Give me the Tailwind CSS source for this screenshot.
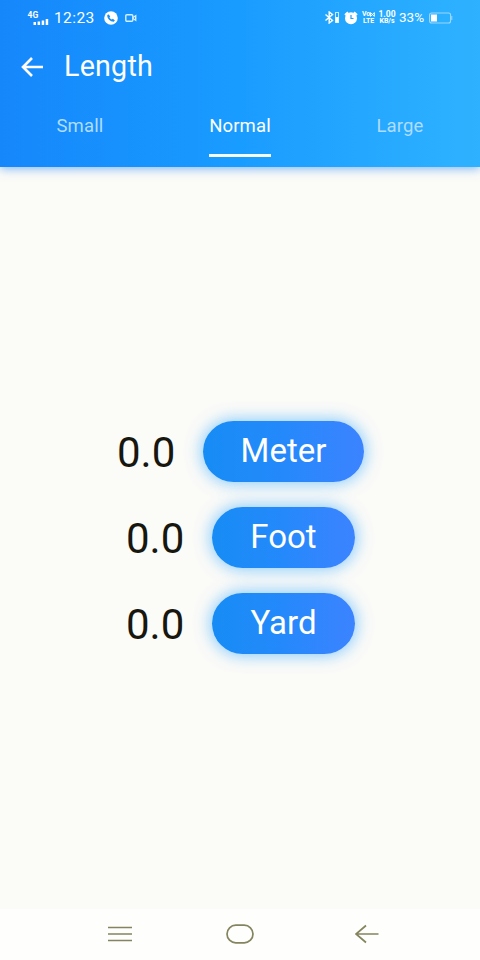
<!DOCTYPE html>
<html lang="en"><head><meta charset="utf-8"><title>Length</title>
<script src="https://cdn.jsdelivr.net/npm/@tailwindcss/browser@4"></script></head>
<body class="w-[480px] h-[960px] overflow-hidden flex flex-col bg-[#fbfbf8] font-[Roboto,sans-serif]">
<header class="h-[167px] shrink-0 flex flex-col text-white bg-linear-to-r from-[#1687fb] via-[#199cff] to-[#2eb2ff] shadow-[0_2px_9px_#4d9df5b0]">
  <div class="h-[35px] flex items-center pl-[27px] pr-[27px]">
    <svg class="w-[23px] h-[16px]" viewBox="0 0 23 16" fill="#fff"><text x="0.500" y="8" font-size="8.5" font-weight="700" font-family="Roboto">4G</text><path d="M6.500 12h2.500v3H6.500zM10.600 11.500h2.500v3.500h-2.500zM14.700 10.500h2.500v4.500h-2.500zM18.700 9h2.500v6h-2.500z"/></svg>
    <span class="ml-[4px] text-[15.5px] leading-[18px] tracking-[.4px] w-[42px] whitespace-nowrap">12:23</span>
    <svg class="ml-[8px] w-[14px] h-[14px]" viewBox="0 0 14 14"><circle cx="7" cy="7" r="6.800" fill="#fff"/><path d="M4.300 3.200 3.200 4.300c0 3.500 3 6.500 6.500 6.500l1.200-1.300-2-1.700-1.200.8c-1-.5-1.700-1.200-2.200-2.200l.7-1.200z" fill="#198ff4"/></svg>
    <svg class="ml-[7px] w-[12px] h-[8px]" viewBox="0 0 12 8" fill="none" stroke="#d4efff" stroke-width="1.400"><rect x=".8" y=".8" width="7" height="6.400" rx="1"/><path d="m8 3.500 2.700-1.800v4.600L8 4.500"/></svg>
    <div class="ml-auto flex items-center">
      <svg class="w-[16px] h-[13px]" viewBox="0 0 16 13" fill="none" stroke="#fff" stroke-width="1.400"><path d="m1.500 3.500 7 6L5.200 12V1l3.300 2.500-7 6"/><rect x="11.500" y="1.500" width="3" height="10" stroke="#c9e9ff" stroke-width="1"/><path d="M13 6v5.500" stroke-width="3"/></svg>
      <svg class="ml-[4px] w-[14px] h-[14px]" viewBox="0 0 14 14"><circle cx="7" cy="7.300" r="6" fill="#fff"/><path d="M1 4 4 1.300M13 4l-3-2.700" stroke="#fff" stroke-width="2"/><path d="M7 4v3.500h2.500" fill="none" stroke="#249ff8" stroke-width="1.200"/></svg>
      <span class="ml-[4px] w-[13px] text-[7px] leading-[6.5px] font-bold text-center whitespace-nowrap tracking-[-.1px]"><span class="flex h-[6.5px] items-center justify-center">Vo<svg class="w-[5px] h-[5px]" viewBox="0 0 5 5" fill="none" stroke="#fff"><path d="M.5 4.500v-4l4 4v-4z"/></svg></span>LTE</span>
      <span class="ml-[3px] w-[18px] text-[7px] leading-[6.5px] font-bold text-center whitespace-nowrap"><span class="text-[8.5px]">1.00</span><br>KB/s</span>
      <span class="ml-[3px] w-[26px] text-[13.5px] whitespace-nowrap">33%</span>
      <svg class="ml-[4px] w-[24px] h-[12px]" viewBox="0 0 24 12"><rect x=".6" y="1" width="21" height="10" rx="2" fill="none" stroke="#9bd8ff" stroke-width="1.100"/><path d="M2 2.500h6v7H2z" fill="#fff"/><path d="M22.800 4v4" stroke="#9bd8ff"/></svg>
    </div>
  </div>
  <div class="h-[64px] flex items-center pl-[21px]">
    <svg class="w-[22px] h-[20px]" viewBox="0 0 22 20" fill="none" stroke="#fff" stroke-width="2.600"><path d="M11 1 2 10l9 9M2 10h20"/></svg>
    <h1 class="ml-[21px] -mt-[2px] text-[28.7px] leading-[34px] tracking-[.2px]">Length</h1>
  </div>
  <nav class="h-[68px] grid grid-cols-3 text-[18.5px] leading-[22px] tracking-[.15px] text-center text-[#b0dcff]">
    <div class="pt-[16px]">Small</div>
    <div class="pt-[16px] text-white flex flex-col items-center">Normal<div class="mt-[17px] w-[62px] h-[3px] bg-[#f4fff8]"></div></div>
    <div class="pt-[16px]">Large</div>
  </nav>
</header>
<main class="grow pt-[254px] flex flex-col items-center gap-[25px] text-[42px] leading-none text-[#171710]">
  <div class="h-[61px] w-[247px] ml-px flex items-center justify-between"><span class="pt-[2px]">0.0</span><button class="w-[161px] h-[61px] pb-[2px] rounded-full bg-linear-to-r from-[#168cf5] via-[#2489fb] to-[#3b83ff] shadow-[0_0_15px_2px_#58b7ffb0] text-white text-[33px]">Meter</button></div>
  <div class="h-[61px] w-[229px] ml-px flex items-center justify-between"><span class="pt-[2px]">0.0</span><button class="w-[143px] h-[61px] pb-[2px] rounded-full bg-linear-to-r from-[#168cf5] via-[#2489fb] to-[#3b83ff] shadow-[0_0_15px_2px_#58b7ffb0] text-white text-[33px]">Foot</button></div>
  <div class="h-[61px] w-[229px] ml-px flex items-center justify-between"><span class="pt-[2px]">0.0</span><button class="w-[143px] h-[61px] pb-[2px] rounded-full bg-linear-to-r from-[#168cf5] via-[#2489fb] to-[#3b83ff] shadow-[0_0_15px_2px_#58b7ffb0] text-white text-[33px]">Yard</button></div>
</main>
<footer class="h-[51px] shrink-0 bg-[#fefefc] flex items-center pb-[1px] pl-[108px]">
  <svg class="w-[24px] h-[18px]" viewBox="0 0 24 18" stroke="#84845f" stroke-width="1.700"><path d="M0 2.500h24M0 9h24M0 15.500h24"/></svg>
  <svg class="ml-[94px] w-[28px] h-[20px]" viewBox="0 0 28 20" fill="none" stroke="#84845f" stroke-width="1.700"><rect x="1" y="1.200" width="26" height="17.600" rx="8.800"/></svg>
  <svg class="ml-[101px] w-[24px] h-[20px]" viewBox="0 0 24 20" fill="none" stroke="#84845f" stroke-width="1.700"><path d="M11 1.500 1 10l10 8.500M1 10h22.500"/></svg>
</footer>
</body></html>
